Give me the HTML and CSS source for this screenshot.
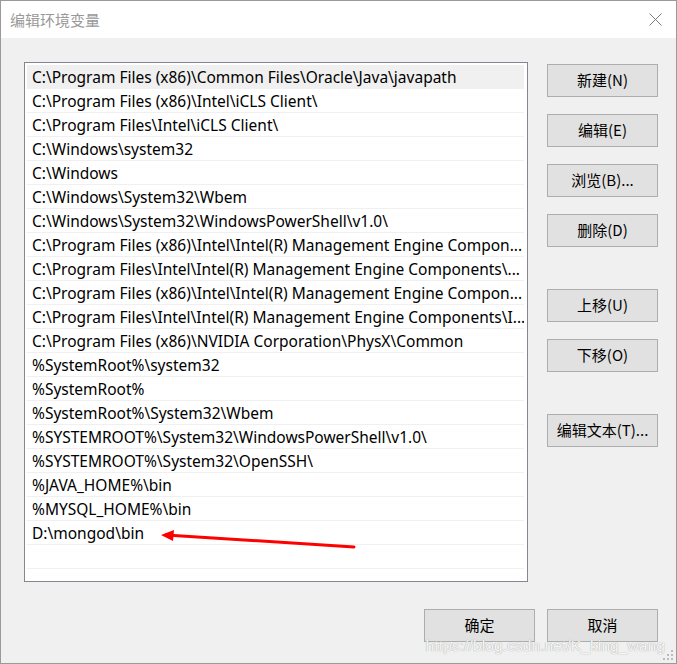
FILE: index.html
```html
<!DOCTYPE html>
<html lang="zh-CN">
<head>
    <meta charset="UTF-8">
    <title>编辑环境变量</title>
    <link rel="stylesheet" href="styles.css">
</head>
<body>
    <div class="fenetre">
        <!-- barre de titre -->
        <div class="titre">
            <span>编辑环境变量</span>
            <svg class="fermer" width="13" height="13" viewBox="0 0 13 13">
                <path d="M0.5 0.5 L12.5 12.5 M12.5 0.5 L0.5 12.5" stroke="#7a7a7a" stroke-width="1" fill="none"/>
            </svg>
        </div>

        <div class="contenu">
            <div class="liste">
                <div class="ligne active">C:\Program Files (x86)\Common Files\Oracle\Java\javapath</div>
                <div class="ligne">C:\Program Files (x86)\Intel\iCLS Client\</div>
                <div class="ligne">C:\Program Files\Intel\iCLS Client\</div>
                <div class="ligne">C:\Windows\system32</div>
                <div class="ligne">C:\Windows</div>
                <div class="ligne">C:\Windows\System32\Wbem</div>
                <div class="ligne">C:\Windows\System32\WindowsPowerShell\v1.0\</div>
                <div class="ligne">C:\Program Files (x86)\Intel\Intel(R) Management Engine Compon...</div>
                <div class="ligne">C:\Program Files\Intel\Intel(R) Management Engine Components\...</div>
                <div class="ligne">C:\Program Files (x86)\Intel\Intel(R) Management Engine Compon...</div>
                <div class="ligne">C:\Program Files\Intel\Intel(R) Management Engine Components\I...</div>
                <div class="ligne">C:\Program Files (x86)\NVIDIA Corporation\PhysX\Common</div>
                <div class="ligne">%SystemRoot%\system32</div>
                <div class="ligne">%SystemRoot%</div>
                <div class="ligne">%SystemRoot%\System32\Wbem</div>
                <div class="ligne">%SYSTEMROOT%\System32\WindowsPowerShell\v1.0\</div>
                <div class="ligne">%SYSTEMROOT%\System32\OpenSSH\</div>
                <div class="ligne">%JAVA_HOME%\bin</div>
                <div class="ligne">%MYSQL_HOME%\bin</div>
                <div class="ligne">D:\mongod\bin</div>
                <div class="ligne"></div>

                <!-- fleche rouge -->
                <svg class="fleche" width="200" height="20" viewBox="0 0 200 20">
                    <path d="M194 15 L6 3" stroke="#ff0000" stroke-width="3" stroke-linecap="round" fill="none"/>
                    <path d="M1 3 L14 -2 L13 9 Z" fill="#ff0000"/>
                </svg>
            </div>

            <div class="boutons">
                <button>新建(N)</button>
                <button>编辑(E)</button>
                <button>浏览(B)...</button>
                <button>删除(D)</button>
                <button class="espace">上移(U)</button>
                <button>下移(O)</button>
                <button class="espace">编辑文本(T)...</button>
            </div>
        </div>

        <div class="pied">
            <button>确定</button>
            <button>取消</button>
        </div>

        <span class="filigrane">https://blog.csdn.net/K_king_wang</span>
        <svg class="poignee" width="11" height="11" viewBox="0 0 11 11">
            <rect x="8" y="0" width="2" height="2" fill="#bcbcbc"/>
            <rect x="4" y="4" width="2" height="2" fill="#bcbcbc"/>
            <rect x="8" y="4" width="2" height="2" fill="#bcbcbc"/>
            <rect x="0" y="8" width="2" height="2" fill="#bcbcbc"/>
            <rect x="4" y="8" width="2" height="2" fill="#bcbcbc"/>
            <rect x="8" y="8" width="2" height="2" fill="#bcbcbc"/>
        </svg>
    </div>
</body>
</html>
```

FILE: styles.css
```css
body {
    margin: 0;
    font-family: "Noto Sans", "Noto Sans CJK SC", sans-serif;
    background: #f0f0f0;
}
/* la fenetre entiere */
.fenetre {
    position: relative;
    box-sizing: border-box;
    width: 677px;
    height: 664px;
    border: 1px solid #9a9a9a;
    background: #f0f0f0;
}
.titre {
    height: 37px;
    background: #ffffff;
    display: flex;
    align-items: center;
    justify-content: space-between;
    padding: 0 14px 0 9px;
    font-family: "Noto Sans CJK SC", sans-serif;
    font-size: 15px;
    color: #999999;
}
.titre span {
    margin-top: -1px;
}
.contenu {
    display: flex;
    padding: 24px 0 0 23px;
    gap: 19px;
}
/* la liste des chemins */
.liste {
    position: relative;
    box-sizing: border-box;
    width: 504px;
    height: 520px;
    border: 1px solid #828790;
    background: #ffffff;
    padding: 2px 0 0 2px;
}
.ligne {
    box-sizing: border-box;
    width: 497px;
    height: 24px;
    line-height: 24px;
    border-bottom: 1px solid #f0f0f0;
    padding-left: 5px;
    font-size: 15.5px;
    color: #000000;
    white-space: nowrap;
    overflow: hidden;
}
.ligne.active {
    background: #f0f0f0;
}
.fleche {
    position: absolute;
    left: 135px;
    top: 469px;
    overflow: visible;
}
.boutons {
    display: flex;
    flex-direction: column;
    gap: 17px;
    padding-top: 2px;
}
button {
    box-sizing: border-box;
    width: 111px;
    height: 33px;
    border: 1px solid #adadad;
    background: #e1e1e1;
    font-family: "Noto Sans CJK SC", sans-serif;
    font-size: 15px;
    color: #000000;
    padding: 0 0 2px 0;
}
.boutons .espace {
    margin-top: 25px;
}
.pied {
    display: flex;
    justify-content: flex-end;
    gap: 12px;
    padding: 27px 18px 0 0;
}
/* filigrane csdn */
.filigrane {
    position: absolute;
    right: 11px;
    bottom: 8px;
    font-family: "Liberation Sans", sans-serif;
    font-size: 15.5px;
    letter-spacing: 0.1px;
    color: rgba(255, 255, 255, 0.9);
    text-shadow: 0 0 1px #b0b0b0, 0 0 1px #b0b0b0;
}
.poignee {
    position: absolute;
    right: 2px;
    bottom: 2px;
}
```
